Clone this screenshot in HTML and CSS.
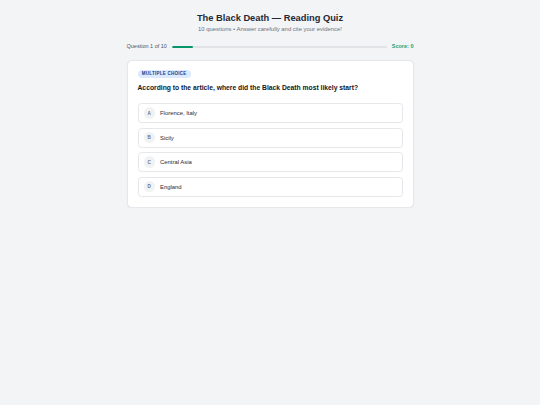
FILE: index.html
```html
<!DOCTYPE html>
<html lang="en">
<head>
<meta charset="utf-8">
<title>The Black Death — Reading Quiz</title>
<link rel="stylesheet" href="styles.css">
</head>
<body>
<div class="page">
  <header class="header">
    <h1 class="title">The Black Death — Reading Quiz</h1>
    <p class="subtitle">10 questions • Answer carefully and cite your evidence!</p>
  </header>

  <div class="progress">
    <span class="progress-label">Question 1 of 10</span>
    <div class="track"><div class="fill" style="width:10%"></div></div>
    <span class="score">Score: 0</span>
  </div>

  <section class="card">
    <span class="badge">Multiple Choice</span>
    <h2 class="question">According to the article, where did the Black Death most likely start?</h2>
    <div class="options">
      <button class="option"><span class="letter">A</span><span class="option-text">Florence, Italy</span></button>
      <button class="option"><span class="letter">B</span><span class="option-text">Sicily</span></button>
      <button class="option"><span class="letter">C</span><span class="option-text">Central Asia</span></button>
      <button class="option"><span class="letter">D</span><span class="option-text">England</span></button>
    </div>
  </section>
</div>
</body>
</html>
```

FILE: styles.css
```css
html {
  background: #f3f4f6;
}
body {
  margin: 0;
  font-family: "Liberation Sans", Arial, Helvetica, sans-serif;
  color: #1f2937;
  background: #f3f4f6;
}
.page {
  width: 287px;
  margin: 0 auto;
  padding-top: 11.5px;
}
.header {
  text-align: center;
}
.title {
  margin: 0;
  font-size: 9.3px;
  line-height: 12.2px;
  font-weight: 700;
  color: #1f2937;
}
.subtitle {
  margin: 1px 0 0;
  font-size: 5.9px;
  line-height: 8.4px;
  color: #6b7280;
}
.progress {
  display: flex;
  align-items: center;
  gap: 5px;
  margin-top: 10px;
  font-size: 5.5px;
  line-height: 7.6px;
}
.progress-label {
  color: #4b5563;
}
.track {
  flex: 1;
  height: 2.6px;
  border-radius: 1.3px;
  background: #e1e3e7;
  overflow: hidden;
}
.fill {
  height: 100%;
  background: #059669;
  border-radius: 1.3px;
}
.score {
  font-weight: 700;
  color: #10a37a;
}
.card {
  display: flex;
  flex-direction: column;
  align-items: flex-start;
  margin-top: 9.5px;
  background: #ffffff;
  border: 1px solid #e5e7eb;
  border-radius: 5px;
  padding: 8.8px 10px 10px;
  box-shadow: 0 0.5px 1.5px rgba(0, 0, 0, 0.06);
}
.badge {
  display: block;
  padding: 1.4px 4.3px;
  border-radius: 10px;
  background: #dbeafe;
  color: #1e3a8a;
  font-size: 4.5px;
  line-height: 5px;
  font-weight: 700;
  text-transform: uppercase;
  letter-spacing: 0.25px;
}
.question {
  margin: 5.2px 0 10.8px;
  font-size: 6.75px;
  line-height: 9.3px;
  font-weight: 700;
  color: #111827;
}
.options {
  display: flex;
  flex-direction: column;
  gap: 4.3px;
  align-self: stretch;
}
.option {
  display: flex;
  align-items: center;
  gap: 5px;
  width: 100%;
  height: 20.2px;
  padding: 0 5px;
  background: #ffffff;
  border: 1px solid #e5e7eb;
  border-radius: 3.4px;
  font-family: inherit;
  text-align: left;
  cursor: pointer;
}
.letter {
  display: flex;
  align-items: center;
  justify-content: center;
  flex: none;
  width: 11.5px;
  height: 11.5px;
  border-radius: 50%;
  background: #f1f2f4;
  color: #6b7280;
  font-size: 4.6px;
  font-weight: 700;
}
.option-text {
  font-size: 5.9px;
  line-height: 8px;
  color: #1f2937;
}
```
